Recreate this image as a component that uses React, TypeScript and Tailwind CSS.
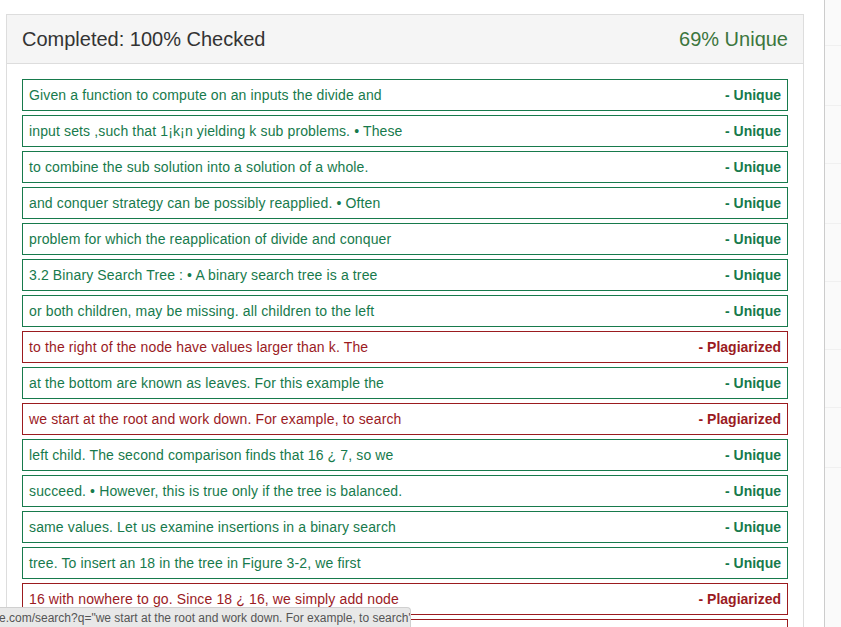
import React from "react";

type Row = { text: string; plag?: boolean; label?: boolean };

const rows: Row[] = [
  { text: "Given a function to compute on an inputs the divide and" },
  { text: "input sets ,such that 1¡k¡n yielding k sub problems. • These" },
  { text: "to combine the sub solution into a solution of a whole." },
  { text: "and conquer strategy can be possibly reapplied. • Often" },
  { text: "problem for which the reapplication of divide and conquer" },
  { text: "3.2 Binary Search Tree : • A binary search tree is a tree" },
  { text: "or both children, may be missing. all children to the left" },
  { text: "to the right of the node have values larger than k. The", plag: true },
  { text: "at the bottom are known as leaves. For this example the" },
  { text: "we start at the root and work down. For example, to search", plag: true },
  { text: "left child. The second comparison finds that 16 ¿ 7, so we" },
  { text: "succeed. • However, this is true only if the tree is balanced." },
  { text: "same values. Let us examine insertions in a binary search" },
  { text: "tree. To insert an 18 in the tree in Figure 3-2, we first" },
  { text: "16 with nowhere to go. Since 18 ¿ 16, we simply add node", plag: true },
];

export default function App() {
  return (
    <div
      className="relative flex h-[627px] w-[841px] overflow-hidden bg-white"
      style={{ fontFamily: '"Liberation Sans", Arial, sans-serif' }}
    >
      <div className="w-[824px] shrink-0 pl-[6px] pt-[14px]">
        <div className="w-[798px] border border-[#dddddd] bg-white">
          <div className="flex h-[49px] items-center justify-between border-b border-[#dddddd] bg-[#f5f5f5] px-[15px]">
            <span className="text-[20px] text-[#333333]">Completed: 100% Checked</span>
            <span className="text-[20px] text-[#3c763d]">69% Unique</span>
          </div>
          <div className="flex flex-col gap-[4px] px-[15px] pt-[15px]">
            {rows.map((r, i) => (
              <div
                key={i}
                className={
                  r.plag
                    ? "flex h-[32px] items-center justify-between border border-[#9b1b1f] px-[6px] text-[14px] text-[#9b1b1f]"
                    : "flex h-[32px] items-center justify-between border border-[#177a4c] px-[6px] text-[14px] text-[#177a4c]"
                }
              >
                <span className="tracking-[0.13px]">{r.text}</span>
                <span className="font-bold">{r.plag ? "- Plagiarized" : "- Unique"}</span>
              </div>
            ))}
            <div className="h-[32px] border border-[#9b1b1f]" />
          </div>
        </div>
      </div>
      <div className="w-px shrink-0 bg-[#cccccc]" />
      <div className="flex flex-1 flex-col bg-[#fafafa]">
        <div className="h-[46px] border-b border-[#f0f0f0]" />
        <div className="h-[60px] border-b border-[#f0f0f0]" />
        <div className="h-[58px] border-b border-[#f0f0f0]" />
        <div className="h-[60px] border-b border-[#f0f0f0]" />
        <div className="h-[58px] border-b border-[#f0f0f0]" />
        <div className="h-[68px] border-b border-[#f0f0f0]" />
        <div className="h-[58px] border-b border-[#f0f0f0]" />
        <div className="h-[60px] border-b border-[#f0f0f0]" />
      </div>
      <div className="absolute bottom-0 left-0 flex h-[20px] w-[411px] items-center overflow-hidden rounded-tr-[4px] border-t border-r border-[#d0d0d0] bg-[#e8e8e8] text-[12px] whitespace-nowrap text-[#555555]">
        <span className="-ml-[1px]">e.com/search?q="we start at the root and work down. For example, to search"</span>
      </div>
    </div>
  );
}
